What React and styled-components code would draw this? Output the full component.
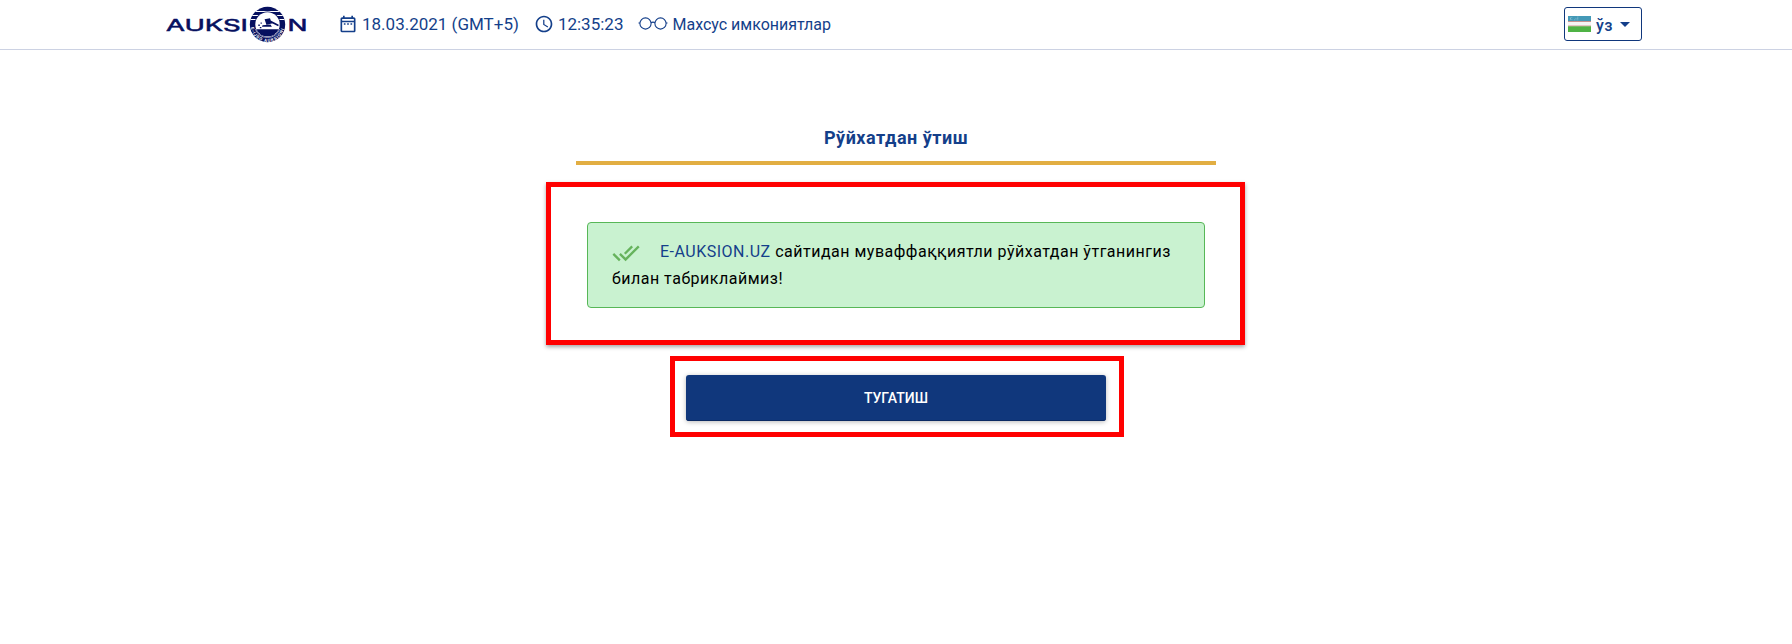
import React from "react";
import styled, { createGlobalStyle } from "styled-components";
import { MdOutlineDateRange, MdAccessTime, MdDoneAll } from "react-icons/md";

const GlobalStyle = createGlobalStyle`
  body {
    margin: 0;
    background: #fff;
    font-family: Roboto, "Liberation Sans", sans-serif;
  }
  *, *::before, *::after { box-sizing: border-box; }
`;

const Header = styled.header`
  display: flex;
  align-items: flex-start;
  height: 50px;
  padding: 0 150px 0 166px;
  border-bottom: 1px solid #ccd2e3;
  color: #143f8a;
`;

const LogoLink = styled.a`
  display: block;
  width: 142px;
  height: 49px;
  margin-right: 30px;
  svg { display: block; }
`;

const InfoItem = styled.div`
  display: flex;
  align-items: center;
  height: 48px;
  margin-right: ${(p) => p.$after || 0}px;
  font-size: ${(p) => p.$size}px;
  white-space: nowrap;
  svg { flex: none; margin-right: ${(p) => p.$gap}px; }
`;

const LangButton = styled.button`
  display: flex;
  align-items: center;
  width: 78px;
  height: 34px;
  margin: 7px 0 0 auto;
  padding: 0 0 0 3px;
  border: 1px solid #10377c;
  border-radius: 3px;
  background: #fff;
  color: #143f8a;
  font: 500 16px Roboto, "Liberation Sans", sans-serif;
`;

const LangCode = styled.span`
  margin: 2px 7px 0 5px;
  letter-spacing: 0.5px;
`;

const Main = styled.main`
  display: flex;
  flex-direction: column;
  align-items: center;
  padding-top: 75px;
`;

const Title = styled.h1`
  width: 640px;
  height: 40px;
  margin: 0 0 17px;
  border-bottom: 4px solid #e2ae42;
  color: #143f8a;
  font-size: 18px;
  font-weight: 700;
  line-height: 26px;
  letter-spacing: 0.5px;
  text-align: center;
`;

const MessageFrame = styled.section`
  width: 699px;
  height: 163px;
  margin-right: 1px;
  padding: 35px 35px 32px 36px;
  border: 5px solid #f00;
  box-shadow: 0 2px 4px rgba(0, 0, 0, 0.35);
`;

const Alert = styled.div`
  height: 86px;
  padding: 15px 24px;
  border: 1px solid #57b757;
  border-radius: 4px;
  background: #c9f2d0;
  color: #000;
  font-size: 16px;
  line-height: 27px;
  letter-spacing: 0.5px;
  svg {
    height: 28px;
    margin: -8px 20px -4px 0;
    color: #66b35c;
    vertical-align: -6px;
  }
`;

const SiteName = styled.span`
  color: #143f8a;
`;

const ActionFrame = styled.div`
  width: 454px;
  height: 81px;
  margin: 11px 0 0 2px;
  padding: 14px 13px 11px 11px;
  border: 5px solid #f00;
`;

const FinishButton = styled.button`
  display: block;
  width: 100%;
  height: 46px;
  padding: 0;
  border: 0;
  border-radius: 3px;
  background: #10377c;
  box-shadow: 0 1px 5px rgba(0, 0, 0, 0.28), inset 0 -1px 0 #0b2a63;
  color: #fff;
  font: 500 14px Roboto, "Liberation Sans", sans-serif;
`;

function Logo() {
  return (
    <svg width="142" height="49" viewBox="0 0 142 49" aria-label="Auksion">
      <defs>
        <clipPath id="disc"><circle cx="101.5" cy="24.5" r="17.7" /></clipPath>
        <path id="arc" d="M87.3 25 A14.2 14.2 0 0 0 115.7 25" />
      </defs>
      <g fill="#06105f" stroke="#06105f" strokeWidth=".5" fontFamily="Inter, sans-serif" fontWeight="400" fontSize="16.4">
        <text x="0" y="31" textLength="82" lengthAdjust="spacingAndGlyphs">AUKSI</text>
        <text x="121.5" y="31" textLength="20" lengthAdjust="spacingAndGlyphs">N</text>
      </g>
      <g clipPath="url(#disc)">
        <rect x="83" y="6" width="37" height="37" fill="#06105f" />
        <path d="M83 11.5h37M83 15.5h37M83 19.5h37" stroke="#fff" strokeWidth="1.2" />
      </g>
      <circle cx="101.5" cy="24.5" r="13" fill="#06105f" />
      <circle cx="101.5" cy="24.5" r="12.2" fill="#fff" />
      <path d="M90.4 29.2h22.2a12.2 12.2 0 0 1-22.2 0z" fill="#06105f" />
      <path d="M98.6 19.2l5.4-1 1.8 5.2-5.4 1.4zM104.6 20.6l8.2 4.2-.6 1.4-8.2-4zM96.5 25.2l8-.8 1.4 2.4H96zM92.3 24.5h1.5V26h-1.5zM94.6 22.6h1.2v1.2h-1.2zM93.8 27h1.6v1.2h-1.6z" fill="#06105f" />
      <path d="M89.4 29.2a13 13 0 0 0 24.2 0" fill="none" stroke="#fff" strokeWidth=".6" />
      <text fill="#fff" fontFamily="Roboto, sans-serif" fontSize="4.3" fontWeight="700" dy="2.8">
        <textPath href="#arc" startOffset="2" textLength="39">E-IJRO AUKSIONI</textPath>
      </text>
    </svg>
  );
}

function Glasses() {
  return (
    <svg width="30" height="16" viewBox="0 0 30 16" fill="none" stroke="currentColor" strokeWidth="1.1">
      <circle cx="7.5" cy="7.5" r="5.6" />
      <circle cx="22.5" cy="7.5" r="5.6" />
      <path d="M13 6.7q2-1.2 4 0M.5 7h1.5M28 7h1.5" />
    </svg>
  );
}

function Flag() {
  return (
    <svg width="23" height="16" viewBox="0 0 23 16">
      <rect width="23" height="16" fill="#f5f5f5" />
      <rect width="23" height="5.3" fill="#4499b7" />
      <rect y="5" width="23" height=".8" fill="#c9827c" />
      <rect y="9.6" width="23" height=".8" fill="#c9827c" />
      <rect y="10.3" width="23" height="5.7" fill="#4fb345" />
      <circle cx="3.4" cy="2.7" r="1.4" fill="#8cc3d5" />
      <circle cx="4" cy="2.7" r="1.1" fill="#4499b7" />
      <path d="M6 3.8h5M7.5 2.4h3.5M9 1.1h2" stroke="#8cc3d5" strokeWidth=".7" strokeDasharray=".9 .7" />
    </svg>
  );
}

export default function App() {
  return (
    <>
      <GlobalStyle />
      <Header>
        <LogoLink><Logo /></LogoLink>
        <InfoItem $size={17} $gap={4} $after={15}>
          <MdOutlineDateRange size={20} />18.03.2021 (GMT+5)
        </InfoItem>
        <InfoItem $size={17} $gap={4} $after={15}>
          <MdAccessTime size={20} />12:35:23
        </InfoItem>
        <InfoItem $size={16} $gap={4}>
          <Glasses />Махсус имкониятлар
        </InfoItem>
        <LangButton>
          <Flag />
          <LangCode>ўз</LangCode>
          <svg width="10" height="5" viewBox="0 0 10 5"><path d="M0 0h10L5 5z" fill="#143f8a" /></svg>
        </LangButton>
      </Header>
      <Main>
        <Title>Рўйхатдан ўтиш</Title>
        <MessageFrame>
          <Alert>
            <MdDoneAll size={28} />
            <SiteName>E-AUKSION.UZ</SiteName> сайтидан муваффаққиятли рўйхатдан ўтганингиз билан табриклаймиз!
          </Alert>
        </MessageFrame>
        <ActionFrame>
          <FinishButton>ТУГАТИШ</FinishButton>
        </ActionFrame>
      </Main>
    </>
  );
}
